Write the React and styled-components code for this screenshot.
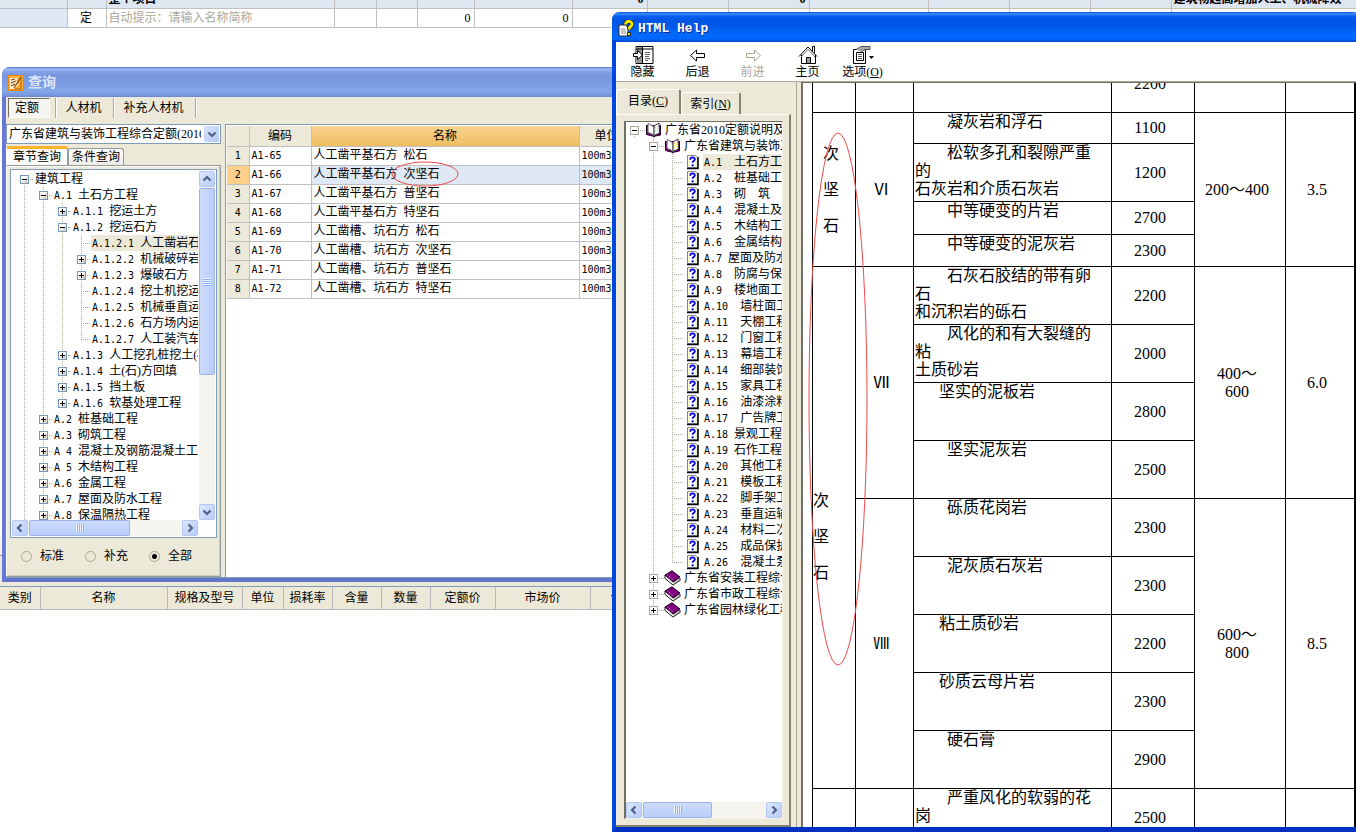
import React from "react";
import styled, { createGlobalStyle, css } from "styled-components";

const GlobalStyle = createGlobalStyle`
  * {
    box-sizing: border-box;
  }
  body {
    margin: 0;
    background: #fff;
    color: #000;
    font-family: "Liberation Serif", "Noto Sans CJK SC", sans-serif;
    font-size: 12px;
    line-height: 16px;
  }
  button, select, input {
    margin: 0;
    padding: 0;
    border: 0;
    border-radius: 0;
    background: none;
    color: inherit;
    font: inherit;
    appearance: none;
  }
  svg {
    flex: none;
  }
  table {
    border-collapse: collapse;
    table-layout: fixed;
  }
  th {
    font-weight: normal;
  }
`;

/* ---------- data ---------- */

const topCols = [67, 39, 228, 42, 41, 57, 98, 75, 81, 81, 119, 81, 81, 81, 190];

const budgetHead = [
  ["类别", 40],
  ["名称", 127],
  ["规格及型号", 75],
  ["单位", 41],
  ["损耗率", 49],
  ["含量", 49],
  ["数量", 49],
  ["定额价", 65],
  ["市场价", 95],
  ["合价", 65],
];

const quotaTree = [
  [0, "", "建筑工程", "-"],
  [1, "A.1 ", "土石方工程", "-"],
  [2, "A.1.1 ", "挖运土方", "+"],
  [2, "A.1.2 ", "挖运石方", "-"],
  [3, "A.1.2.1 ", "人工凿岩石", "", "active"],
  [3, "A.1.2.2 ", "机械破碎岩石", "+"],
  [3, "A.1.2.3 ", "爆破石方", "+"],
  [3, "A.1.2.4 ", "挖土机挖运石方", ""],
  [3, "A.1.2.5 ", "机械垂直运石方", ""],
  [3, "A.1.2.6 ", "石方场内运输", ""],
  [3, "A.1.2.7 ", "人工装汽车运", "", "last"],
  [2, "A.1.3 ", "人工挖孔桩挖土(石)方", "+"],
  [2, "A.1.4 ", "土(石)方回填", "+"],
  [2, "A.1.5 ", "挡土板", "+"],
  [2, "A.1.6 ", "软基处理工程", "+", "last"],
  [1, "A.2 ", "桩基础工程", "+"],
  [1, "A.3 ", "砌筑工程", "+"],
  [1, "A 4 ", "混凝土及钢筋混凝土工程", "+"],
  [1, "A 5 ", "木结构工程", "+"],
  [1, "A.6 ", "金属工程", "+"],
  [1, "A.7 ", "屋面及防水工程", "+"],
  [1, "A.8 ", "保温隔热工程", "+"],
];

const quotas = [
  ["A1-65", "人工凿平基石方 松石"],
  ["A1-66", "人工凿平基石方 次坚石"],
  ["A1-67", "人工凿平基石方 普坚石"],
  ["A1-68", "人工凿平基石方 特坚石"],
  ["A1-69", "人工凿槽、坑石方 松石"],
  ["A1-70", "人工凿槽、坑石方 次坚石"],
  ["A1-71", "人工凿槽、坑石方 普坚石"],
  ["A1-72", "人工凿槽、坑石方 特坚石"],
];

const helpPages = [
  ["A.1  ", "土石方工程"],
  ["A.2  ", "桩基础工程"],
  ["A.3  ", "砌　筑"],
  ["A.4  ", "混凝土及钢筋"],
  ["A.5  ", "木结构工程"],
  ["A.6  ", "金属结构工程"],
  ["A.7 ", "屋面及防水工程"],
  ["A.8  ", "防腐与保温"],
  ["A.9  ", "楼地面工程"],
  ["A.10  ", "墙柱面工程"],
  ["A.11  ", "天棚工程"],
  ["A.12  ", "门窗工程"],
  ["A.13  ", "幕墙工程"],
  ["A.14  ", "细部装饰"],
  ["A.15  ", "家具工程"],
  ["A.16  ", "油漆涂料"],
  ["A.17  ", "广告牌工程"],
  ["A.18 ", "景观工程"],
  ["A.19 ", "石作工程"],
  ["A.20  ", "其他工程"],
  ["A.21  ", "模板工程"],
  ["A.22  ", "脚手架工程"],
  ["A.23  ", "垂直运输"],
  ["A.24  ", "材料二次运输"],
  ["A.25  ", "成品保护"],
  ["A.26  ", "混凝土泵送"],
];

const helpBooks = [
  "广东省安装工程综合定额",
  "广东省市政工程综合定额",
  "广东省园林绿化工程",
];

// height, indented first line, following lines, density, spanning cells
const rocks = [
  {
    h: 31,
    name: ["　　凝灰岩和浮石"],
    density: "1100",
    kind: { span: 4, text: "次坚石" },
    grade: { span: 4, text: "Ⅵ", range: ["200～400"], f: "3.5" },
  },
  { h: 58, name: ["　　松软多孔和裂隙严重", "的", "石灰岩和介质石灰岩"], density: "1200" },
  { h: 33, name: ["　　中等硬变的片岩"], density: "2700" },
  { h: 32, name: ["　　中等硬变的泥灰岩"], density: "2300" },
  {
    h: 58,
    name: ["　　石灰石胶结的带有卵", "石", "和沉积岩的砾石"],
    density: "2200",
    kind: { span: 9, text: "次坚石", left: true },
    grade: { span: 4, text: "Ⅶ", range: ["400～", "600"], f: "6.0" },
  },
  { h: 58, name: ["　　风化的和有大裂缝的", "粘", "土质砂岩"], density: "2000" },
  { h: 58, name: ["　  坚实的泥板岩"], density: "2800" },
  { h: 58, name: ["　　坚实泥灰岩"], density: "2500" },
  {
    h: 58,
    name: ["　　砾质花岗岩"],
    density: "2300",
    grade: { span: 5, text: "Ⅷ", range: ["600～", "800"], f: "8.5" },
  },
  { h: 58, name: ["　　泥灰质石灰岩"], density: "2300" },
  { h: 58, name: ["　  粘土质砂岩"], density: "2200" },
  { h: 58, name: ["　  砂质云母片岩"], density: "2300" },
  { h: 58, name: ["　　硬石膏"], density: "2900" },
  {
    h: 58,
    name: ["　　严重风化的软弱的花", "岗"],
    density: "2500",
    kind: { span: 1, text: "" },
    grade: { span: 1, text: "", range: [""], f: "" },
  },
];

/* ---------- main window behind ---------- */

const Desktop = styled.main`
  position: relative;
  display: flex;
  flex-direction: column;
  min-height: 100vh;
  overflow: hidden;
`;

const TopGrid = styled.div`
  display: flex;
  align-items: flex-end;
  height: 28px;
  overflow: hidden;
  table {
    flex: none;
    width: 1361px;
  }
  td {
    height: 19px;
    padding: 0 3px 0 2px;
    border-right: 1px solid #c0c0c0;
    border-bottom: 1px solid #c0c0c0;
    line-height: 16px;
    white-space: nowrap;
  }
  tr:first-child td {
    background: #dee6f0;
    font-weight: bold;
  }
  tr:last-child td:first-child {
    background: #dfe9f5;
  }
`;

const Num = styled.td`
  text-align: right;
`;

const Mid = styled.td`
  text-align: center;
`;

const Hint = styled.td`
  color: #aca899;
`;

const Blank = styled.div`
  height: 509px;
`;

const PanelTop = styled.div`
  height: 50px;
  border-bottom: 1px solid #7f9db9;
  background: linear-gradient(#f4f3ec 18px, #7f9db9 18px, #7f9db9 19px, #ece9d8 19px);
`;

const BudgetTable = styled.table`
  width: 655px;
  background: #ece9d8;
  th {
    height: 22px;
    padding: 0;
    border-right: 1px solid #b8b8bc;
    border-bottom: 1px solid #b8b8bc;
  }
`;

/* ---------- shared parts ---------- */

const Code = styled.span`
  font-family: "DejaVu Sans Mono", monospace;
  font-size: 10px;
  white-space: pre;
`;

const Tree = styled.ul`
  flex: 1;
  min-width: 0;
  margin: 0;
  padding: 0 0 0 ${(p) => p.$pad || 0}px;
  list-style: none;
  overflow: hidden;
`;

const TreeRow = styled.li`
  display: flex;
  height: 16px;
  white-space: nowrap;
`;

const dots = css`
  repeating-linear-gradient(#aca899 0 1px, transparent 1px 2px)
`;

const Guide = styled.span`
  flex: none;
  display: flex;
  align-items: center;
  width: 19px;
  height: 16px;
  padding-left: ${(p) => p.$x - 4}px;
  background-image: ${(p) => (p.$empty ? "none" : dots)}${(p) =>
      p.$leaf &&
      css`, repeating-linear-gradient(90deg, #aca899 0 1px, transparent 1px 2px)`};
  background-repeat: no-repeat;
  background-position: ${(p) => p.$x}px ${(p) => (p.$first ? 8 : 0)}px, ${(p) => p.$x}px 8px;
  background-size: 1px ${(p) => (p.$last ? 8 : 16)}px, 11px 1px;
`;

const Toggle = styled.button`
  position: relative;
  width: 9px;
  height: 9px;
  border: 1px solid ${(p) => (p.$classic ? "#aca899" : "#7898b5")};
  background: ${(p) => (p.$classic ? "#fff" : "linear-gradient(135deg, #fff 40%, #c8bfae)")};
  &::before,
  &::after {
    content: "";
    position: absolute;
    background: #000;
  }
  &::before {
    left: 1px;
    top: 3px;
    width: 5px;
    height: 1px;
  }
  &::after {
    display: ${(p) => (p.$open ? "none" : "block")};
    left: 3px;
    top: 1px;
    width: 1px;
    height: 5px;
  }
`;

const TreeLabel = styled.span`
  flex: ${(p) => (p.$active ? 1 : "none")};
  padding-left: ${(p) => p.$pad}px;
  background: ${(p) => (p.$active ? "#ece9d8" : "none")};
  line-height: 16px;
`;

const Bar = styled.div`
  display: flex;
  flex-direction: ${(p) => (p.$vertical ? "column" : "row")};
  flex: none;
  gap: 1px;
  ${(p) => (p.$vertical ? "width: 16px;" : "height: 16px;")}
  background: #f5f4ee;
`;

const ScrollButton = styled.button`
  display: flex;
  align-items: center;
  justify-content: center;
  flex: none;
  width: 16px;
  height: 16px;
  border: 1px solid #b4c8f4;
  border-radius: 2px;
  background: linear-gradient(135deg, #dde7fe, #b6cbf8);
`;

const Thumb = styled.div`
  display: flex;
  align-items: center;
  justify-content: center;
  flex: 0 0 ${(p) => p.$size}px;
  margin-${(p) => (p.$vertical ? "bottom" : "right")}: auto;
  border: 1px solid #98b4ea;
  border-radius: 2px;
  background: linear-gradient(${(p) => (p.$vertical ? "90deg" : "180deg")}, #cedcfd, #b9cdfa);
  &::after {
    content: "";
    width: 8px;
    height: 8px;
    background: repeating-linear-gradient(
      ${(p) => (p.$vertical ? "180deg" : "90deg")},
      #eef4fe 0 1px,
      #8cb0f8 1px 2px
    );
  }
`;

const arrows = {
  up: "M1.5 6.500 5 3 8.500 6.500",
  down: "M1.5 3.500 5 7 8.500 3.500",
  left: "M6.500 1.500 3 5l3.500 3.500",
  right: "M3.500 1.500 7 5 3.500 8.500",
};

const Arrow = ({ dir }) => (
  <svg width="10" height="10" viewBox="0 0 10 10" fill="none" stroke="#4d6185" strokeWidth="2.200">
    <path d={arrows[dir]} />
  </svg>
);

const ScrollBar = ({ vertical, size }) => (
  <Bar $vertical={vertical}>
    <ScrollButton type="button" aria-label="scroll back">
      <Arrow dir={vertical ? "up" : "left"} />
    </ScrollButton>
    <Thumb $vertical={vertical} $size={size} />
    <ScrollButton type="button" aria-label="scroll forward">
      <Arrow dir={vertical ? "down" : "right"} />
    </ScrollButton>
  </Bar>
);

const Ring = styled.svg`
  position: absolute;
  left: ${(p) => p.$left}px;
  top: ${(p) => p.$top}px;
  fill: none;
  stroke: #f04848;
  pointer-events: none;
`;

/* ---------- query window ---------- */

const QueryWindow = styled.section`
  position: absolute;
  left: 2px;
  top: 67px;
  display: flex;
  flex-direction: column;
  width: 700px;
  height: 515px;
  border: solid #6878d8;
  border-width: 0 4px 4px;
  border-bottom-color: #6474cc;
  border-radius: 8px 8px 0 0;
  background: #ece9d8;
  box-shadow: inset 0 -1px #7f9db9;
`;

const QueryTitle = styled.header`
  display: flex;
  align-items: center;
  gap: 4px;
  height: 30px;
  margin: 0 -4px;
  padding: 2px 6px 0;
  border-radius: 8px 8px 0 0;
  background: linear-gradient(#4a76cc 0, #9cbcf0 2px, #8aa6e8 4px, #7996de 8px, #7b98e0 14px, #82a8e8 24px, #7c9ce2 27px, #6c86d4 30px);
  color: #dce6f8;
  font-size: 14px;
  font-weight: bold;
`;

const QueryTools = styled.div`
  display: flex;
  height: 27px;
  padding: 1px 2px 6px;
`;

const ToolButton = styled.button`
  width: ${(p) => p.$w}px;
  padding-right: 2px;
  border-right: 1px solid #aca899;
  box-shadow: 1px 0 #fff;
`;

const PressedButton = styled.button`
  width: 42px;
  margin-right: 5px;
  padding-right: 4px;
  border: 1px solid;
  border-color: #716f64 #fff #fff #716f64;
  background: #f6f4ee;
`;

const Divider = styled.span`
  width: 1px;
  background: #aca899;
  box-shadow: 1px 0 #fff;
`;

const QueryBody = styled.div`
  display: flex;
  flex: 1;
  min-height: 0;
  gap: 4px;
`;

const Side = styled.div`
  display: flex;
  flex-direction: column;
  width: 215px;
`;

const Combo = styled.label`
  display: flex;
  flex: none;
  height: 20px;
  padding: 1px;
  border: 1px solid #7f9db9;
  background: #fff;
  select {
    flex: 1;
    min-width: 0;
    padding: 0 3px 0 1px;
    line-height: 16px;
    outline: none;
  }
`;

const ComboArrow = styled.span`
  display: flex;
  align-items: center;
  justify-content: center;
  width: 15px;
  border-radius: 1px;
  background: linear-gradient(135deg, #d6e2fd, #b6cbf8);
`;

const Tabs = styled.div`
  display: flex;
  align-items: flex-end;
  height: 21px;
`;

const QueryTab = styled.button`
  height: ${(p) => (p.$on ? 19 : 17)}px;
  padding: 0 ${(p) => (p.$on ? 6 : 3)}px;
  border: 1px solid #919b9c;
  border-top: ${(p) => (p.$on ? "3px solid #ffb32c" : "1px solid #919b9c")};
  border-bottom: 0;
  border-left-color: ${(p) => (p.$on ? "#fff" : "#919b9c")};
  border-radius: 3px 3px 0 0;
  background: ${(p) => (p.$on ? "#fcfcfa" : "linear-gradient(#fff, #eeece4)")};
  line-height: 14px;
`;

const QueryPanel = styled.div`
  display: flex;
  flex: 1;
  flex-direction: column;
  min-height: 0;
  margin-bottom: 1px;
  padding: 3px;
  border: 1px solid #919b9c;
  border-left-color: #fff;
  box-shadow: inset -1px -1px #d0cdbe, inset 0 1px #fff;
`;

const QuotaBox = styled.div`
  display: flex;
  flex-direction: column;
  height: 369px;
  padding: 1px;
  border: 1px solid #7f9db9;
  background: #fff;
`;

const QuotaTop = styled.div`
  display: flex;
  flex: 1;
  gap: 1px;
  min-height: 0;
`;

const QuotaBottom = styled.div`
  margin-right: 17px;
`;

const Radios = styled.div`
  display: flex;
  padding: 10px 0 0 11px;
`;

const Radio = styled.label`
  display: flex;
  align-items: center;
  gap: 8px;
  width: 64px;
  input {
    width: 11px;
    height: 11px;
    border: 1px solid #aca899;
    border-radius: 50%;
  }
  input:checked {
    background: radial-gradient(#000 2px, transparent 3px);
  }
`;

const GridArea = styled.div`
  flex: 1;
  min-width: 0;
  margin-bottom: 1px;
  padding: 1px;
  border: solid #7f9db9;
  border-width: 1px 0 0 1px;
  background: #fff;
`;

const QuotaTable = styled.table`
  width: 100%;
  th,
  td {
    height: 19px;
    padding: 0 2px;
    border-right: 1px solid #c0c0c0;
    border-bottom: 1px solid #c0c0c0;
    line-height: 16px;
    text-align: left;
    white-space: nowrap;
  }
  th {
    background: #ece9d8;
    text-align: center;
  }
  thead th {
    height: 20px;
  }
`;

const NameHead = styled.th`
  && {
    background: linear-gradient(#f8d490, #f0bc60);
  }
`;

const UnitHead = styled.th`
  && {
    padding-left: 15px;
    text-align: left;
  }
`;

const QuotaRow = styled.tr`
  ${(p) =>
    p.$on &&
    css`
      th {
        background: #ffd08a;
      }
      td:nth-child(n + 3) {
        background: #dfe9f5;
      }
    `}
`;

/* ---------- help window ---------- */

const HelpWindow = styled.section`
  position: absolute;
  left: 612px;
  right: -4px;
  top: 12px;
  bottom: 5px;
  display: flex;
  flex-direction: column;
  border: 4px solid #0046e0;
  border-top: 0;
  border-bottom-width: 5px;
  border-bottom-color: #0030c0;
  border-radius: 8px 8px 0 0;
  background: #ece9d8;
`;

const HelpTitle = styled.header`
  display: flex;
  flex: none;
  align-items: center;
  gap: 4px;
  height: 30px;
  margin: 0 -4px;
  padding: 3px 6px 0;
  border-radius: 8px 8px 0 0;
  background: linear-gradient(#0850d8 0, #3c90ff 2px, #0860f0 4px, #0054e4 8px, #0058e8 14px, #0068fc 22px, #0068fc 27px, #0040d0 30px);
  color: #fff;
  font-family: "Liberation Mono", monospace;
  font-size: 13px;
  font-weight: bold;
  text-shadow: 1px 1px #0c2c88;
`;

const HelpTools = styled.nav`
  display: flex;
  flex: none;
  height: 40px;
  padding-top: 3px;
  border-bottom: 1px solid #aca899;
  background: #fff;
`;

const HelpButton = styled.button`
  display: flex;
  flex-direction: column;
  align-items: center;
  width: 55px;
  padding-right: 2px;
  color: ${(p) => (p.disabled ? "#aca899" : "#000")};
  line-height: 14px;
  white-space: nowrap;
`;

const HelpBody = styled.div`
  display: flex;
  flex: 1;
  min-height: 0;
`;

const HelpSide = styled.div`
  display: flex;
  flex: none;
  flex-direction: column;
  width: 181px;
  padding: 7px 5px 0 0;
  border-right: 1px solid #aca899;
`;

const HelpTabs = styled.div`
  display: flex;
  align-items: flex-end;
  height: 25px;
`;

const HelpTab = styled.button`
  height: ${(p) => (p.$on ? 25 : 22)}px;
  width: ${(p) => (p.$on ? 65 : 60)}px;
  padding-bottom: ${(p) => (p.$on ? 2 : 0)}px;
  border: solid;
  border-width: 1px 2px 0 1px;
  border-color: #fff #85826f #fff #fff;
  border-radius: 3px 3px 0 0;
`;

const HelpPanel = styled.div`
  display: flex;
  flex: 1;
  min-height: 0;
  padding: 6px 6px 6px 8px;
  border: solid;
  border-width: 1px 2px 2px 0;
  border-color: #fff #85826f #85826f #fff;
`;

const HelpBox = styled.div`
  display: flex;
  flex: 1;
  flex-direction: column;
  min-width: 0;
  border: solid;
  border-width: 1px 1px 1px 2px;
  border-color: #716f64 #f4f2e8 #f4f2e8 #716f64;
  background: #fff;
`;

const Doc = styled.article`
  position: relative;
  flex: 1;
  min-width: 0;
  margin-left: 4px;
  padding-left: 9px;
  border: solid #716f64;
  border-width: 1px 0 0 2px;
  background: #fff;
  overflow: hidden;
`;

// the document is scrolled half a row down
const RockTable = styled.table`
  width: 100%;
  margin-top: -29px;
  font-size: 16px;
  line-height: 18px;
  td {
    padding: 0 6px 0 0;
    border: 1px solid #000;
    text-align: center;
  }
`;

const RockRow = styled.tr`
  height: ${(p) => p.$h}px;
`;

const Rock = styled.td`
  && {
    padding: 0 0 0 1px;
    text-align: left;
    vertical-align: top;
    white-space: pre;
  }
`;

const Kind = styled.td`
  && {
    ${(p) => p.$left && "padding: 18px 26px 0 0;"}
    line-height: 36px;
  }
  span {
    display: block;
  }
`;

/* ---------- icons ---------- */

const QueryIcon = () => (
  <svg width="16" height="16" viewBox="0 0 16 16">
    <rect width="16" height="16" fill="#e88a10" />
    <path d="M1 1h14v14H1z" fill="#f8b030" />
    <path d="M13 2v12H3" stroke="#b85800" fill="none" />
    <path d="M2 3h8l-2 3h2l-1 3h2l-5 5H2z" fill="#fff4d8" />
    <path d="M3 5l4-1M3 8l5-2M3 11l4-2M13 2L6 13" stroke="#8c3c08" strokeWidth="1.200" />
  </svg>
);

const HelpIcon = () => (
  <svg width="16" height="18" viewBox="0 0 16 18">
    <path d="M1 5h7l2 3v8H1z" fill="#fff" stroke="#333" />
    <path d="M3 9h4M3 11h5M3 13h5" stroke="#888" />
    <path d="M7.500 4.500c0-4.500 7-4 6.500 0-.3 2-3 2-3 5" fill="none" stroke="#222" strokeWidth="4.500" />
    <path d="M7.500 4.500c0-4.500 7-4 6.500 0-.3 2-3 2-3 5" fill="none" stroke="#f8f000" strokeWidth="2.800" />
    <path d="M9.500 12.500h3v3h-3z" fill="#f8f000" stroke="#222" />
  </svg>
);

const ToolIcon = ({ children }) => (
  <svg width="22" height="20" viewBox="0 0 22 20" fill="none" stroke="currentColor">
    {children}
  </svg>
);

const HideIcon = () => (
  <ToolIcon>
    <path d="M4 1.500h17v17H4z" fill="#fff" />
    <path d="M4 2h6v16H4z" fill="#999" stroke="none" />
    <path d="M10.500 2v16M4 4h17" />
    <path d="M13 7.500h5M13 9.500h5M13 11.500h4M13 13.500h5M13 15.500h3" stroke="#666" />
    <path d="M1.500 8.500h4v-3l5 4.500-5 4.500v-3h-4z" fill="#fff" />
  </ToolIcon>
);

const BackIcon = () => (
  <ToolIcon>
    <path d="M3.500 10.500l6-5.500v3.500h8v4h-8V16z" />
  </ToolIcon>
);

const ForwardIcon = () => (
  <ToolIcon>
    <path d="M18.500 10.500l-6-5.500v3.500h-8v4h8V16z" />
  </ToolIcon>
);

const HomeIcon = () => (
  <ToolIcon>
    <path d="M2 11.500L11 2l9 9.500M4.500 9.500v9h14v-9M15.500 6V1.500h2V8M9.500 18.500v-6h4v6" />
    <path d="M4 12L11 4.500 18 12" stroke="#777" />
    <path d="M10 13h3v5h-3z" fill="#999" stroke="none" />
  </ToolIcon>
);

const OptionsIcon = () => (
  <ToolIcon>
    <path d="M1.500 4.500h12v14h-12z" fill="#fff" />
    <path d="M4.500 7.500h7v8h-7z" />
    <path d="M6 9.500h4M6 11.500h4M6 13.500h4" stroke="#555" />
    <path d="M4 4.500L9 1.500h9v3h-5L9 7" fill="#aaa" stroke="#555" />
    <path d="M17 11h5l-2.500 3z" fill="#000" stroke="none" />
  </ToolIcon>
);

const OpenBook = () => (
  <svg width="20" height="16" viewBox="0 0 20 16">
    <path d="M1.500 3v9.500l6 1.500 1.500 1 1.500-1 5-1V3" fill="#800080" stroke="#200020" />
    <path d="M3 1.500l4 2 2 2v8.500l-2-2-4-1.500z" fill="#fff" stroke="#666" />
    <path d="M9 13.500V4l5-3 .5 10z" fill="#fff" stroke="#333" />
    <path d="M10.500 5v6M12.500 4v6" stroke="#e8d840" strokeDasharray="1 1" />
  </svg>
);

const ClosedBook = () => (
  <svg width="20" height="16" viewBox="0 0 20 16">
    <path d="M1 5v3.500L9 15l7-4.500V8z" fill="#fff" stroke="#111" />
    <path d="M9 12.500l7-4M9.500 14l6-3.800" stroke="#888" fill="none" />
    <path d="M8 .8l8 6.200-7 5L1 5z" fill="#800080" stroke="#180018" />
    <path d="M3.500 5L9 9.500" stroke="#e8a0e8" strokeDasharray="1 1" />
  </svg>
);

const PageIcon = () => (
  <svg width="20" height="16" viewBox="0 0 20 16">
    <path d="M4.500 1.500h8l2 2v10h-10z" fill="#fff" stroke="#888" />
    <path d="M15 3v11.500H4" stroke="#000" strokeWidth="1.500" fill="none" />
    <path d="M6 3v9M13 5v7" stroke="#e8e040" strokeDasharray="1 1" />
    <path d="M7.300 5.800c0-3.200 4.700-3 4.500-.3-.2 1.500-2.200 1.500-2.200 3.300" stroke="#0000e8" strokeWidth="1.800" fill="none" />
    <path d="M8.600 10.300h2v2h-2z" fill="#0000e8" />
  </svg>
);

/* ---------- pieces ---------- */

const QuotaTree = () => (
  <Tree $pad={3}>
    {quotaTree.map(([level, code, name, sign, flag], i) => (
      <TreeRow key={i}>
        {Array.from({ length: level }, (_, n) => (
          <Guide key={n} $x={9} />
        ))}
        <Guide $x={9} $leaf $first={i === 0} $last={flag === "last"}>
          {sign && <Toggle type="button" aria-label={name} $open={sign === "-"} />}
        </Guide>
        <TreeLabel $pad={1} $active={flag === "active"}>
          <Code>{code}</Code>
          {name}
        </TreeLabel>
      </TreeRow>
    ))}
  </Tree>
);

const HelpTree = () => (
  <Tree>
    <TreeRow>
      <Guide $x={8} $leaf $last $first>
        <Toggle type="button" aria-label="collapse" $classic $open />
      </Guide>
      <OpenBook />
      <TreeLabel>广东省2010定额说明及</TreeLabel>
    </TreeRow>
    <TreeRow>
      <Guide $x={8} $empty />
      <Guide $x={8} $leaf>
        <Toggle type="button" aria-label="collapse" $classic $open />
      </Guide>
      <OpenBook />
      <TreeLabel>广东省建筑与装饰工程</TreeLabel>
    </TreeRow>
    {helpPages.map(([code, name], i) => (
      <TreeRow key={code}>
        <Guide $x={8} $empty />
        <Guide $x={8} />
        <Guide $x={8} $leaf $last={i === helpPages.length - 1} />
        <PageIcon />
        <TreeLabel $pad={1} $active={i === 0}>
          <Code>{code}</Code>
          {name}
        </TreeLabel>
      </TreeRow>
    ))}
    {helpBooks.map((name, i) => (
      <TreeRow key={name}>
        <Guide $x={8} $empty />
        <Guide $x={8} $leaf $last={i === helpBooks.length - 1}>
          <Toggle type="button" aria-label={name} $classic />
        </Guide>
        <ClosedBook />
        <TreeLabel>{name}</TreeLabel>
      </TreeRow>
    ))}
  </Tree>
);

const Query = () => (
  <QueryWindow>
    <QueryTitle>
      <QueryIcon />
      查询
    </QueryTitle>
    <QueryTools>
      <PressedButton type="button">定额</PressedButton>
      <Divider />
      <ToolButton type="button" $w={58}>人材机</ToolButton>
      <ToolButton type="button" $w={82}>补充人材机</ToolButton>
    </QueryTools>
    <QueryBody>
      <Side>
        <Combo>
          <select aria-label="定额库">
            <option>广东省建筑与装饰工程综合定额(2010)</option>
          </select>
          <ComboArrow>
            <Arrow dir="down" />
          </ComboArrow>
        </Combo>
        <Tabs>
          <QueryTab type="button" $on>章节查询</QueryTab>
          <QueryTab type="button">条件查询</QueryTab>
        </Tabs>
        <QueryPanel>
          <QuotaBox>
            <QuotaTop>
              <QuotaTree />
              <ScrollBar vertical size={187} />
            </QuotaTop>
            <QuotaBottom>
              <ScrollBar size={101} />
            </QuotaBottom>
          </QuotaBox>
          <Radios>
            <Radio>
              <input type="radio" name="scope" />
              标准
            </Radio>
            <Radio>
              <input type="radio" name="scope" />
              补充
            </Radio>
            <Radio>
              <input type="radio" name="scope" defaultChecked />
              全部
            </Radio>
          </Radios>
        </QueryPanel>
      </Side>
      <GridArea>
        <QuotaTable>
          <colgroup>
            <col style={{ width: 22 }} />
            <col style={{ width: 62 }} />
            <col style={{ width: 268 }} />
            <col />
          </colgroup>
          <thead>
            <tr>
              <th />
              <th>编码</th>
              <NameHead>名称</NameHead>
              <UnitHead>单位</UnitHead>
            </tr>
          </thead>
          <tbody>
            {quotas.map(([code, name], i) => (
              <QuotaRow key={code} $on={i === 1}>
                <th>
                  <Code>{i + 1}</Code>
                </th>
                <td>
                  <Code>{code}</Code>
                </td>
                <td>
                  {name.split(" ")[0]}
                  <Code> </Code>
                  {name.split(" ")[1]}
                </td>
                <td>
                  <Code>100m3</Code>
                </td>
              </QuotaRow>
            ))}
          </tbody>
        </QuotaTable>
      </GridArea>
    </QueryBody>
    <Ring $left={385} $top={94} width="69" height="26">
      <ellipse cx="34" cy="13" rx="33" ry="12" />
    </Ring>
  </QueryWindow>
);

const Help = () => (
  <HelpWindow>
    <HelpTitle>
      <HelpIcon />
      HTML Help
    </HelpTitle>
    <HelpTools>
      <HelpButton type="button">
        <HideIcon />
        隐藏
      </HelpButton>
      <HelpButton type="button">
        <BackIcon />
        后退
      </HelpButton>
      <HelpButton type="button" disabled>
        <ForwardIcon />
        前进
      </HelpButton>
      <HelpButton type="button">
        <HomeIcon />
        主页
      </HelpButton>
      <HelpButton type="button">
        <OptionsIcon />
        <span>选项(<u>O</u>)</span>
      </HelpButton>
    </HelpTools>
    <HelpBody>
      <HelpSide>
        <HelpTabs>
          <HelpTab type="button" $on>目录(<u>C</u>)</HelpTab>
          <HelpTab type="button">索引(<u>N</u>)</HelpTab>
        </HelpTabs>
        <HelpPanel>
          <HelpBox>
            <HelpTree />
            <ScrollBar size={69} />
          </HelpBox>
        </HelpPanel>
      </HelpSide>
      <Doc>
        <RockTable>
          <colgroup>
            <col style={{ width: 43 }} />
            <col style={{ width: 58 }} />
            <col style={{ width: 198 }} />
            <col style={{ width: 83 }} />
            <col style={{ width: 91 }} />
            <col style={{ width: 69 }} />
            <col />
          </colgroup>
          <tbody>
            <RockRow $h={58}>
              <td />
              <td />
              <td />
              <td>2200</td>
              <td />
              <td />
              <td />
            </RockRow>
            {rocks.map((r, i) => (
              <RockRow key={i} $h={r.h}>
                {r.kind && (
                  <Kind rowSpan={r.kind.span} $left={r.kind.left}>
                    {r.kind.text.split("").map((c) => (
                      <span key={c}>{c}</span>
                    ))}
                  </Kind>
                )}
                {r.grade && <td rowSpan={r.grade.span}>{r.grade.text}</td>}
                <Rock>{r.name.join("\n")}</Rock>
                <td>{r.density}</td>
                {r.grade && (
                  <>
                    <td rowSpan={r.grade.span}>
                      {r.grade.range.map((t) => (
                        <div key={t}>{t}</div>
                      ))}
                    </td>
                    <td rowSpan={r.grade.span}>{r.grade.f}</td>
                    <td rowSpan={r.grade.span} />
                  </>
                )}
              </RockRow>
            ))}
          </tbody>
        </RockTable>
        <Ring $left={5} $top={49} width="60" height="535">
          <ellipse cx="30" cy="267" rx="29" ry="266" />
        </Ring>
      </Doc>
    </HelpBody>
  </HelpWindow>
);

const App = () => {
  return (
    <Desktop>
      <GlobalStyle />
      <TopGrid>
        <table>
          <colgroup>
            {topCols.map((w, i) => (
              <col key={i} style={{ width: w }} />
            ))}
          </colgroup>
          <tbody>
            <tr>
              <td />
              <td />
              <td>整个项目</td>
              <td />
              <td />
              <td />
              <td />
              <Num>0</Num>
              <td />
              <Num>0</Num>
              <td />
              <td />
              <td />
              <td />
              <td>建筑物超高增加人工、机械降效</td>
            </tr>
            <tr>
              <td />
              <Mid>定</Mid>
              <Hint>自动提示：请输入名称简称</Hint>
              <td />
              <td />
              <Num>0</Num>
              <Num>0</Num>
              <td />
              <td />
              <td />
              <td />
              <td />
              <td />
              <td />
              <td />
            </tr>
          </tbody>
        </table>
      </TopGrid>
      <Blank />
      <PanelTop />
      <BudgetTable>
        <colgroup>
          {budgetHead.map(([name, w]) => (
            <col key={name} style={{ width: w }} />
          ))}
        </colgroup>
        <thead>
          <tr>
            {budgetHead.map(([name]) => (
              <th key={name}>{name}</th>
            ))}
          </tr>
        </thead>
      </BudgetTable>
      <Query />
      <Help />
    </Desktop>
  );
};

export default App;
